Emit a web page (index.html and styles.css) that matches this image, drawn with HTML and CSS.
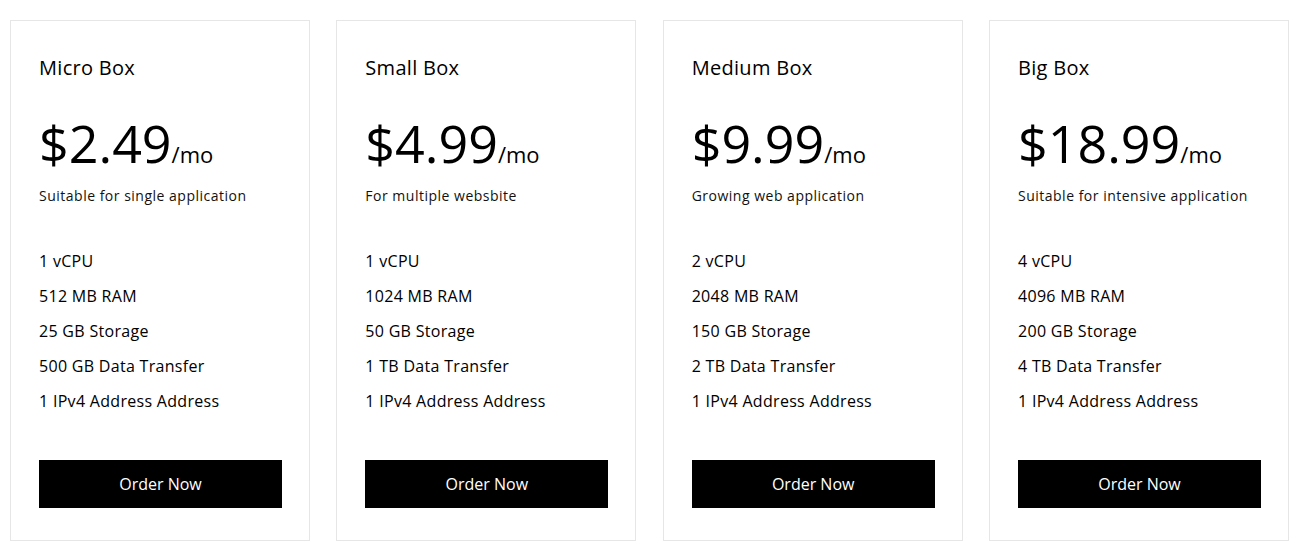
FILE: index.html
```html
<!DOCTYPE html>
<html>
<head>
<meta charset="utf-8">
<link rel="stylesheet" href="styles.css">
</head>
<body>
<div class="plans">
  <div class="card">
    <h3 class="title">Micro Box</h3>
    <div class="price"><span class="amount">$2.49</span><span class="per">/mo</span></div>
    <p class="desc">Suitable for single application</p>
    <ul class="features">
      <li>1 vCPU</li>
      <li>512 MB RAM</li>
      <li>25 GB Storage</li>
      <li>500 GB Data Transfer</li>
      <li>1 IPv4 Address Address</li>
    </ul>
    <a class="btn" href="#">Order Now</a>
  </div>
  <div class="card">
    <h3 class="title">Small Box</h3>
    <div class="price"><span class="amount">$4.99</span><span class="per">/mo</span></div>
    <p class="desc">For multiple websbite</p>
    <ul class="features">
      <li>1 vCPU</li>
      <li>1024 MB RAM</li>
      <li>50 GB Storage</li>
      <li>1 TB Data Transfer</li>
      <li>1 IPv4 Address Address</li>
    </ul>
    <a class="btn" href="#">Order Now</a>
  </div>
  <div class="card">
    <h3 class="title">Medium Box</h3>
    <div class="price"><span class="amount">$9.99</span><span class="per">/mo</span></div>
    <p class="desc">Growing web application</p>
    <ul class="features">
      <li>2 vCPU</li>
      <li>2048 MB RAM</li>
      <li>150 GB Storage</li>
      <li>2 TB Data Transfer</li>
      <li>1 IPv4 Address Address</li>
    </ul>
    <a class="btn" href="#">Order Now</a>
  </div>
  <div class="card">
    <h3 class="title">Big Box</h3>
    <div class="price"><span class="amount">$18.99</span><span class="per">/mo</span></div>
    <p class="desc">Suitable for intensive application</p>
    <ul class="features">
      <li>4 vCPU</li>
      <li>4096 MB RAM</li>
      <li>200 GB Storage</li>
      <li>4 TB Data Transfer</li>
      <li>1 IPv4 Address Address</li>
    </ul>
    <a class="btn" href="#">Order Now</a>
  </div>
</div>
</body>
</html>
```
FILE: styles.css
```css
* { box-sizing: border-box; }
html, body { margin: 0; padding: 0; background: #fff; }
body {
  font-family: "Open Sans", "Liberation Sans", sans-serif;
  color: #000;
}
.plans {
  display: grid;
  grid-template-columns: repeat(4, 300px);
  gap: 26.33px;
  margin: 20px 10px 0;
}
.card {
  border: 1px solid #e6e6e6;
  padding: 32px 28px 32px;
  display: flex;
  flex-direction: column;
  height: 521px;
}
.title {
  margin: 0;
  font-size: 20px;
  font-weight: 400;
  line-height: 30px;
  letter-spacing: 0.3px;
}
.price {
  margin-top: 34px;
  line-height: 52px;
  white-space: nowrap;
}
.amount {
  font-size: 52px;
  font-weight: 400;
}
.per {
  font-size: 22px;
}
.desc {
  margin: 3px 0 0;
  font-size: 14px;
  line-height: 20px;
  color: #111;
  letter-spacing: 0.5px;
}
.features {
  list-style: none;
  margin: 38px 0 0;
  padding: 0;
  font-size: 16px;
  letter-spacing: 0.3px;
}
.features li {
  line-height: 35px;
}
.btn {
  margin-top: auto;
  display: flex;
  align-items: center;
  justify-content: center;
  height: 48px;
  width: 243px;
  background: #000;
  color: #fff;
  text-decoration: none;
  font-size: 16px;
  font-weight: 500;
}
```
